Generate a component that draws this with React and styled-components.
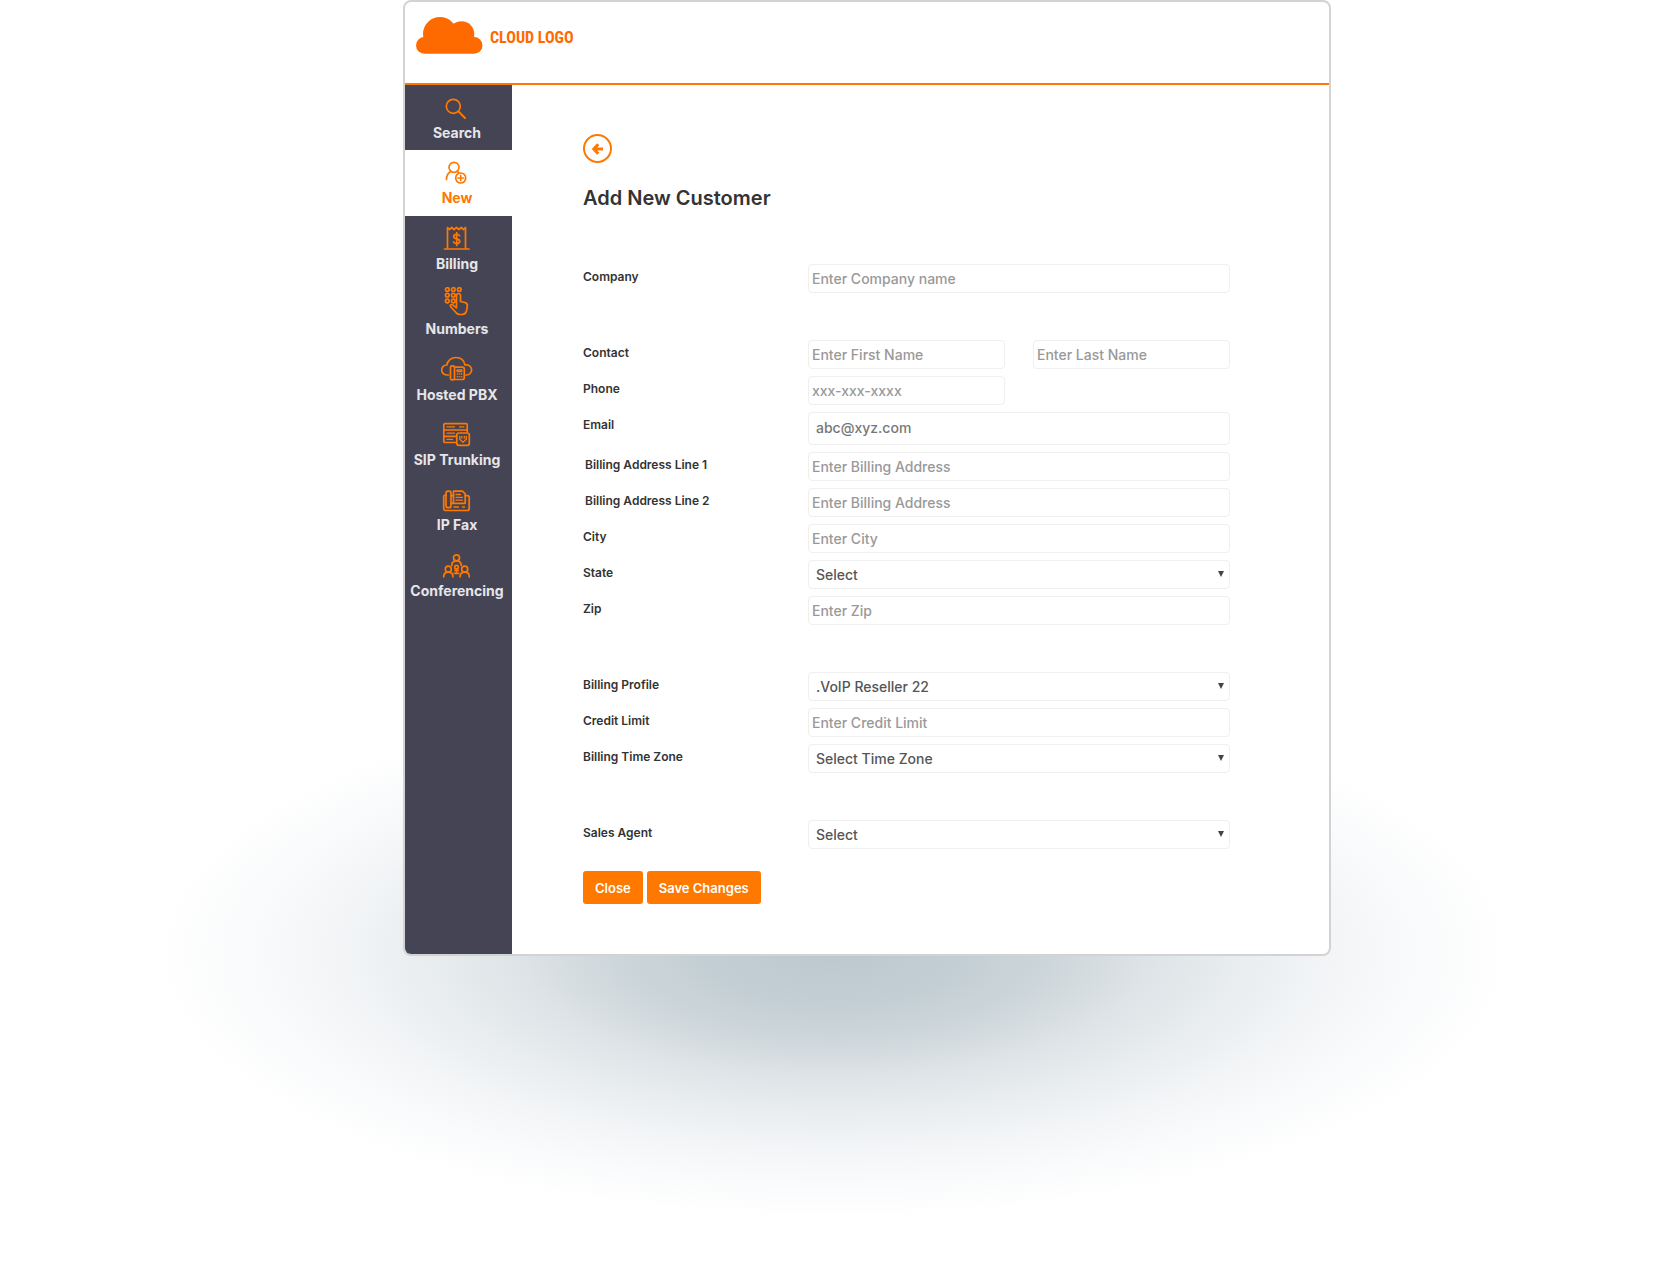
import React from "react";
import styled, { createGlobalStyle } from "styled-components";

const orange = "#ff7800";
const slate = "#454454";

const GlobalStyle = createGlobalStyle`
  *, *::before, *::after { box-sizing: border-box; }
  body {
    margin: 0;
    background: #fff;
    color: #333;
    font-family: Inter, "Open Sans", "Liberation Sans", sans-serif;
  }
  button, input, select { font: inherit; }
`;

const Page = styled.div`
  display: flex;
  justify-content: center;
  min-height: 100vh;
  padding-left: 66px;
  overflow: hidden;
`;

const Stage = styled.div`
  position: relative;
  z-index: 0;
  width: 100%;
  max-width: 928px;
  align-self: flex-start;

  &::before {
    content: "";
    position: absolute;
    z-index: -1;
    left: -246px;
    right: -180px;
    bottom: -262px;
    height: 530px;
    background: radial-gradient(
      closest-side,
      #bcc8ce 0%,
      #c4cfd5 20%,
      #cdd6da 32%,
      #dde3e6 46%,
      #e9edf0 60%,
      #f3f5f7 74%,
      #fafbfc 88%,
      #fff 100%
    );
  }
`;

const Card = styled.div`
  background: #fff;
  border: 2px solid #d3d3d3;
  border-radius: 8px;
  overflow: hidden;
`;

const Header = styled.header`
  height: 83px;
  padding: 15px 11px 0;
  border-bottom: 2px solid ${orange};
`;

const Logo = styled.a`
  display: inline-flex;
  align-items: flex-start;
  gap: 7px;
  color: #ff6a00;
  font: bold 16px/42px "Liberation Sans Narrow", "Roboto Condensed", Roboto, sans-serif;
  text-decoration: none;

  svg { display: block; }
`;

const Body = styled.div`
  display: flex;
`;

const Sidebar = styled.aside`
  flex: 0 0 107px;
  background: ${slate};
`;

const Nav = styled.nav`
  display: flex;
  flex-direction: column;
  height: 523px;
`;

const NavItem = styled.a`
  flex: 1;
  display: flex;
  flex-direction: column;
  align-items: center;
  padding: 6px 3px 0 0;
  background: ${(p) => (p.$active ? "#fff" : "transparent")};
  color: ${(p) => (p.$active ? orange : "#e6e6ea")};
  font-size: 14px;
  font-weight: 700;
  line-height: 20px;
  white-space: nowrap;
  text-decoration: none;

  svg {
    flex: none;
    fill: none;
    stroke: ${orange};
    stroke-width: 1.7;
    stroke-linecap: round;
    stroke-linejoin: round;
  }
`;

const Main = styled.main`
  flex: 1;
  min-width: 0;
  padding: 49px 99px 50px 71px;
`;

const BackButton = styled.button`
  display: grid;
  place-items: center;
  width: 29px;
  height: 29px;
  padding: 0;
  border: 2px solid ${orange};
  border-radius: 50%;
  background: #fff;
  cursor: pointer;
`;

const Title = styled.h1`
  margin: 23px 0 54px;
  font-size: 20px;
  font-weight: 600;
  line-height: 24px;
`;

const Form = styled.form`
  display: flex;
  flex-direction: column;
  gap: 47px;
`;

const Section = styled.div`
  display: flex;
  flex-direction: column;
  gap: 7px;
`;

const Row = styled.div`
  display: grid;
  grid-template-columns: 225px 1fr;
  align-items: start;
`;

const Label = styled.label`
  padding-left: ${(p) => (p.$indent ? "2px" : "0")};
  font-size: 12px;
  font-weight: 600;
  line-height: 26px;
`;

const Fields = styled.div`
  display: grid;
  grid-template-columns: ${(p) => (p.$split ? "1fr 1fr" : "1fr")};
  column-gap: 28px;
`;

const Input = styled.input`
  width: 100%;
  min-width: 0;
  height: ${(p) => (p.$tall ? "33px" : "29px")};
  padding: ${(p) => (p.$tall ? "0 7px 2px" : "0 3px")};
  border: 1px solid #efefef;
  border-radius: 4px;
  background: #fff;
  color: #777;
  font-size: 14px;
  font-weight: 500;

  &::placeholder { color: #999; opacity: 1; }
`;

const SelectBox = styled.div`
  display: grid;
  align-items: center;

  & > * { grid-area: 1 / 1; }
  svg { justify-self: end; margin: 0 6px 2px 0; pointer-events: none; }
`;

const Select = styled.select`
  appearance: none;
  width: 100%;
  height: 29px;
  padding: 0 20px 0 7px;
  border: 1px solid #efefef;
  border-radius: 4px;
  background: #fff;
  color: #555;
  font-size: 14px;
  font-weight: 500;
`;

const Actions = styled.div`
  display: flex;
  gap: 4px;
  margin-top: 15px;
`;

const Button = styled.button`
  height: 33px;
  padding: 0 12px;
  border: 0;
  border-radius: 3px;
  background: ${orange};
  color: #fff;
  font-size: 13px;
  font-weight: 600;
  cursor: pointer;
`;

const Icon = ({ children }) => (
  <svg width="32" height="32" viewBox="0 0 32 32" aria-hidden="true">{children}</svg>
);

const icons = {
  search: (
    <Icon>
      <circle cx="12.3" cy="15.3" r="7" />
      <path d="M17.4 20.4 24 27" strokeWidth="2" />
    </Icon>
  ),
  user: (
    <Icon>
      <circle cx="13" cy="11.3" r="5" />
      <path d="M5.5 23.5c0-4.2 1.6-6.6 4.6-8.2M16 15.3l1.6 1.2" />
      <circle cx="19.7" cy="22" r="5" />
      <path d="M19.7 19.4v5.2M17.1 22h5.2" />
    </Icon>
  ),
  bill: (
    <Icon>
      <path d="M6.5 27V5.5l2 2 2.2-2 2.4 2 2.4-2 2.4 2 2.4-2 2.2 2 2-2V27M3.5 27h24.5" />
      <path d="M18.6 13.8c-.4-1-1.5-1.5-2.9-1.5-1.8 0-3 .8-3 2.2 0 3.2 6.1 1.5 6.1 4.8 0 1.5-1.3 2.3-3.1 2.3-1.6 0-2.8-.6-3.2-1.8M15.7 10.5v13" />
    </Icon>
  ),
  keypad: (
    <Icon>
      {[[6.3, 2.5], [12.3, 2.5], [18.3, 2.5], [6.3, 8.2], [12.3, 8.2], [6.3, 14], [12.3, 14]].map(([x, y]) => (
        <circle key={`${x}-${y}`} cx={x} cy={y} r="1.8" />
      ))}
      <path d="M15.5 20V8.5a2 2 0 0 1 4 0v6l4.3 1c2 .5 2.8 1.5 2.5 3.5l-.6 4c-.5 2.7-2.2 4.5-4.7 4.5h-2.2c-2 0-3.2-.8-4.3-2.5l-5-5.5c-.8-1.4.8-2.6 2.2-1.6l3.8 3" />
    </Icon>
  ),
  cloudPhone: (
    <Icon>
      <path d="M7.5 22h-2a5 5 0 0 1 .3-10C6.5 7.5 10.3 4.5 15 4.5s8 2.9 8.9 7.3h1.6a5.1 5.1 0 0 1 0 10.2H25" />
      <rect x="9.5" y="12.8" width="4" height="14" rx="1.5" />
      <path d="M13.5 14.2h7.8c1.3 0 2 .7 2 2v8.3c0 1.3-.7 2-2 2h-7.8" />
      <path d="M16 16.8h4.8v1.7H16zM16.3 21h.4M18.4 21h.4M20.5 21h.4M16.3 23.7h.4M18.4 23.7h.4M20.5 23.7h.4" strokeWidth="1.3" />
    </Icon>
  ),
  server: (
    <Icon>
      <path d="M14.5 24.5H3.8a1 1 0 0 1-1-1V6.7a1 1 0 0 1 1-1h21.4a1 1 0 0 1 1 1v7M2.8 12h23.4M2.8 18.3h12" />
      <path d="M6 8.9h7.5M18.5 8.9H23M6 15.2h7.5M6 21.4h5.5" strokeWidth="1.3" />
      <rect x="15.8" y="15" width="12.5" height="12.3" rx="2" />
      <path d="M18.8 18.3v2.9l3.2 3.2 3.3-3.2v-2.9M20.8 18.3v1.8M23.3 18.3v1.8" strokeWidth="1.3" />
    </Icon>
  ),
  fax: (
    <Icon>
      <rect x="5" y="8.2" width="5" height="16.5" rx="2" />
      <path d="M5 12h-.5a1.8 1.8 0 0 0-1.8 1.8v11.7a2 2 0 0 0 2 2h21.5a2 2 0 0 0 2-2v-11a1.8 1.8 0 0 0-1.8-1.8h-2.2M10 12.7h2.5M10 20.3h14" />
      <path d="M12.5 20V8.2h9l2.7 2.7V20" />
      <path d="M15 11.5h4.5M15 14.3h6.5M15 17.2h6.5M13 24h4.5M21.5 24h2" strokeWidth="1.3" />
    </Icon>
  ),
  people: (
    <Icon>
      <circle cx="15.5" cy="8.8" r="3" />
      <path d="M10.8 16.5c0-2.5 1.6-4.7 4.7-4.7s4.7 2.2 4.7 4.7" />
      <circle cx="7.3" cy="20.2" r="3" />
      <path d="M2.7 27.8c0-2.5 1.5-4.6 4.6-4.6s4.6 2.1 4.6 4.6" />
      <circle cx="23.7" cy="20.2" r="3" />
      <path d="M19.1 27.8c0-2.5 1.5-4.6 4.6-4.6s4.6 2.1 4.6 4.6" />
      <circle cx="15.5" cy="18.2" r="1.8" />
      <path d="M15.5 20.2v3.3M13.3 24.3h4.4M13.8 21.5h3.4" />
    </Icon>
  ),
};

const navItems = [
  ["Search", icons.search],
  ["New", icons.user],
  ["Billing", icons.bill],
  ["Numbers", icons.keypad],
  ["Hosted PBX", icons.cloudPhone],
  ["SIP Trunking", icons.server],
  ["IP Fax", icons.fax],
  ["Conferencing", icons.people],
];

const TextRow = ({ id, label, indent, half, tall, ...input }) => (
  <Row>
    <Label htmlFor={id} $indent={indent}>{label}</Label>
    <Fields $split={half}>
      <Input id={id} $tall={tall} {...input} />
    </Fields>
  </Row>
);

const SelectRow = ({ id, label, option }) => (
  <Row>
    <Label htmlFor={id}>{label}</Label>
    <SelectBox>
      <Select id={id}>
        <option>{option}</option>
      </Select>
      <svg width="6" height="6" viewBox="0 0 6 6" aria-hidden="true">
        <path d="M0 0h6L3 6z" fill="#444" />
      </svg>
    </SelectBox>
  </Row>
);

export default function App() {
  return (
    <Page>
      <GlobalStyle />
      <Stage>
        <Card>
          <Header>
            <Logo href="#">
              <svg width="67" height="37" viewBox="0 0 67 37" fill="#ff6a00" aria-hidden="true">
                <circle cx="24" cy="17" r="17" />
                <circle cx="45.5" cy="17" r="12.8" />
                <rect x="0" y="20" width="66.5" height="16.8" rx="8.4" />
              </svg>
              CLOUD LOGO
            </Logo>
          </Header>
          <Body>
            <Sidebar>
              <Nav>
                {navItems.map(([name, icon]) => (
                  <NavItem key={name} href="#" $active={name === "New"}>
                    {icon}
                    {name}
                  </NavItem>
                ))}
              </Nav>
            </Sidebar>
            <Main>
              <BackButton type="button" aria-label="Back">
                <svg width="12" height="12" viewBox="0 0 12 12" fill="none" stroke={orange} strokeWidth="3" aria-hidden="true">
                  <path d="M6.2 1.2 1.8 6l4.4 4.8M2.2 6H11" />
                </svg>
              </BackButton>
              <Title>Add New Customer</Title>
              <Form onSubmit={(e) => e.preventDefault()}>
                <Section>
                  <TextRow id="company" label="Company" placeholder="Enter Company name" />
                </Section>
                <Section>
                  <Row>
                    <Label htmlFor="first">Contact</Label>
                    <Fields $split>
                      <Input id="first" placeholder="Enter First Name" />
                      <Input aria-label="Last name" placeholder="Enter Last Name" />
                    </Fields>
                  </Row>
                  <TextRow id="phone" label="Phone" half type="tel" placeholder="xxx-xxx-xxxx" />
                  <TextRow id="email" label="Email" tall type="email" defaultValue="abc@xyz.com" />
                  <TextRow id="address1" label="Billing Address Line 1" indent placeholder="Enter Billing Address" />
                  <TextRow id="address2" label="Billing Address Line 2" indent placeholder="Enter Billing Address" />
                  <TextRow id="city" label="City" placeholder="Enter City" />
                  <SelectRow id="state" label="State" option="Select" />
                  <TextRow id="zip" label="Zip" placeholder="Enter Zip" />
                </Section>
                <Section>
                  <SelectRow id="profile" label="Billing Profile" option=".VoIP Reseller 22" />
                  <TextRow id="credit" label="Credit Limit" placeholder="Enter Credit Limit" />
                  <SelectRow id="zone" label="Billing Time Zone" option="Select Time Zone" />
                </Section>
                <Section>
                  <SelectRow id="agent" label="Sales Agent" option="Select" />
                  <Actions>
                    <Button type="button">Close</Button>
                    <Button type="submit">Save Changes</Button>
                  </Actions>
                </Section>
              </Form>
            </Main>
          </Body>
        </Card>
      </Stage>
    </Page>
  );
}
